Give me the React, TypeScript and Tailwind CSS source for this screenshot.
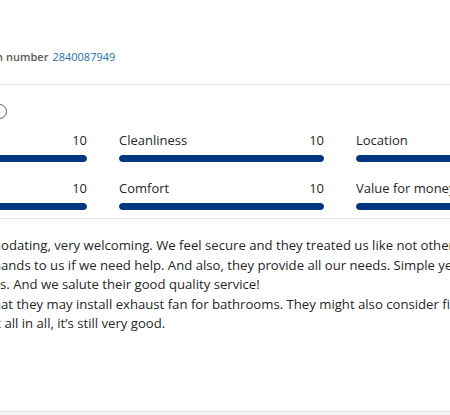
import React from 'react';

type Score = { label: string; value: number };

const scores: Score[] = [
  { label: 'Staff', value: 10 },
  { label: 'Cleanliness', value: 10 },
  { label: 'Location', value: 10 },
  { label: 'Facilities', value: 10 },
  { label: 'Comfort', value: 10 },
  { label: 'Value for money', value: 10 },
];

// each review line: the part clipped off on the left, and the visible part
const reviewLines: { cut: string; cutWidth: string; text: string }[] = [
  { cut: 'Very accomm', cutWidth: 'w-[1px]', text: 'odating, very welcoming. We feel secure and they treated us like not others' },
  { cut: 'always lend their h', cutWidth: 'w-[1px]', text: 'ands to us if we need help. And also, they provide all our needs. Simple yet' },
  { cut: 'the guest', cutWidth: 'w-[0px]', text: 's. And we salute their good quality service!' },
  { cut: 'I just hope th', cutWidth: 'w-[1px]', text: 'at they may install exhaust fan for bathrooms. They might also consider fixing' },
  { cut: 'But', cutWidth: 'w-[1px]', text: '\u00a0all in all, it\u2019s still very good.' },
];

const App: React.FC = () => {
  return (
    <div className="relative w-[450px] h-[415px] overflow-hidden bg-white font-['Open_Sans',sans-serif] text-[#262626]">
      {/* Booking number */}
      <div className="flex items-center pt-[49px] text-[11px] leading-[16px] whitespace-nowrap">
        <span className="flex w-[3px] shrink-0 justify-end overflow-hidden font-semibold text-[#595959]">Confirmation</span>
        <span className="ml-[3px] font-semibold text-[#595959]">number</span>
        <span className="ml-[4px] text-[#2a6ea6]">2840087949</span>
      </div>

      <div className="mt-[19px] border-t border-[#e3e3e3]" />

      {/* info icon, mostly clipped */}
      <div className="mt-[19px] ml-[-8px] w-[15px] h-[15px] rounded-full border border-[#5f5f5f]" />

      {/* Review scores */}
      <div className="mt-[12px] ml-[-118px] grid grid-cols-[205px_205px_205px] gap-x-[32px] gap-y-[17px] text-[13px] leading-[18px]">
        {scores.map((s) => (
          <div key={s.label} className="flex flex-col">
            <div className="flex justify-between whitespace-nowrap">
              <span>{s.label}</span>
              <span>{s.value}</span>
            </div>
            <div className="mt-[6px] h-[7px] rounded-[4px] bg-[#e6e6e6] overflow-hidden">
              <div className="h-full rounded-[4px] bg-[#003580]" style={{ width: `${s.value * 10}%` }} />
            </div>
          </div>
        ))}
      </div>

      <div className="mt-[8px] border-t border-[#e3e3e3]" />

      {/* Review text */}
      <div className="mt-[17px] text-[13.15px] leading-[19.5px] text-[#262626]">
        {reviewLines.map((l, i) => (
          <div key={i} className="flex whitespace-nowrap">
            <span className={`flex ${l.cutWidth} shrink-0 justify-end overflow-hidden`}>{l.cut}</span>
            <span>{l.text}</span>
          </div>
        ))}
      </div>

      {/* next card edge */}
      <div className="absolute left-0 right-0 bottom-0 h-[4px] border-t border-[#e0e0e0] bg-[#f5f5f5]" />
    </div>
  );
};

export default App;
